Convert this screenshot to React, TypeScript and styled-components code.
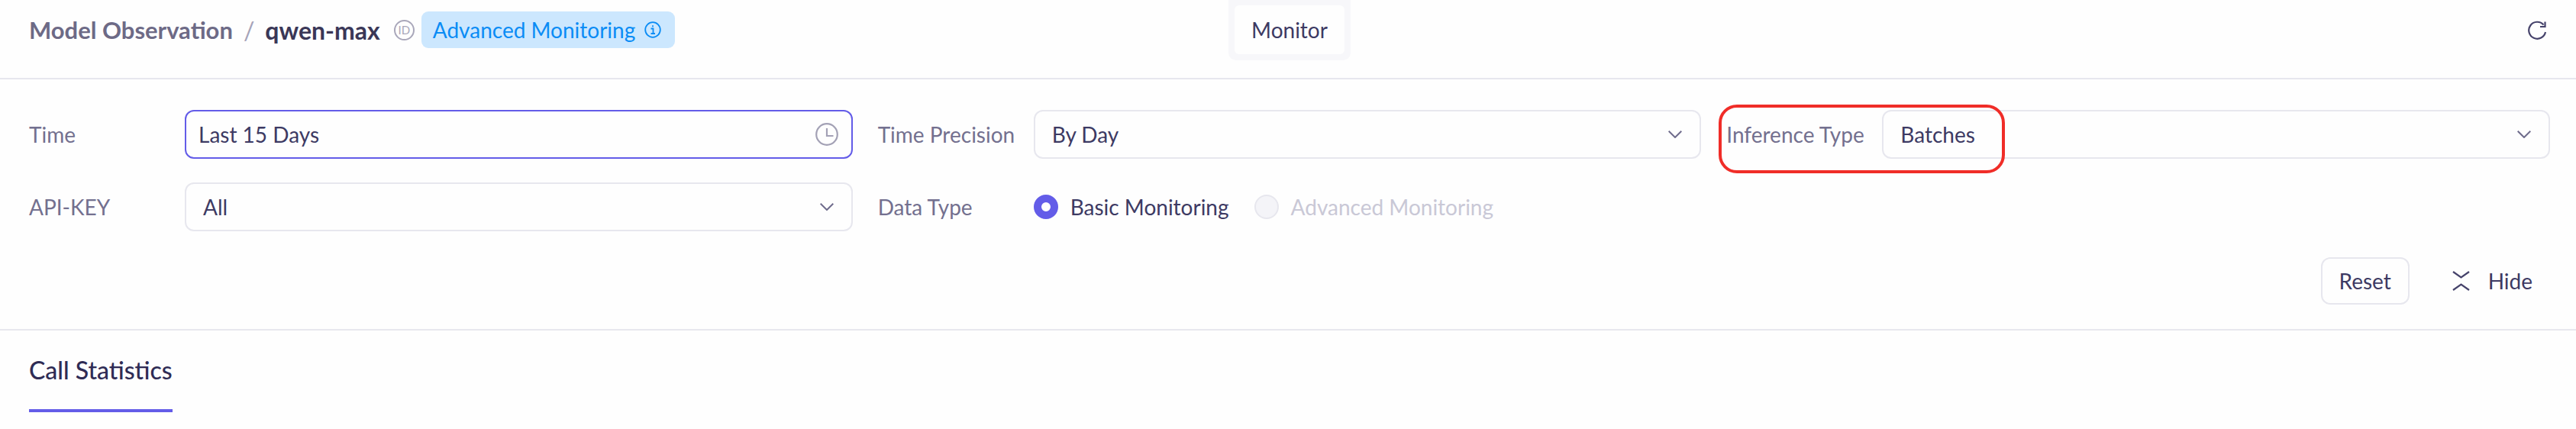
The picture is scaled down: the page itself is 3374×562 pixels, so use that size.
import styled, { createGlobalStyle } from "styled-components";

const GlobalStyle = createGlobalStyle`
  html, body {
    margin: 0;
    background: #fefefe;
    font-family: "Lato", "Liberation Sans", sans-serif;
    color: #3d3a63;
  }
  * { box-sizing: border-box; }
`;

const Page = styled.div`
  width: 3374px;
  height: 562px;
  overflow: hidden;
`;

const Header = styled.header`
  height: 104px;
  padding: 0 34px 0 38px;
  display: grid;
  grid-template-columns: 1fr auto 1fr;
  border-bottom: 2px solid #e7e7ee;
`;

const Breadcrumb = styled.div`
  height: 78px;
  display: flex;
  align-items: center;
  font-size: 32px;
`;

const Parent = styled.span`
  color: #6d6a86;
  font-size: 31px;
  font-weight: 700;
`;

const Slash = styled.span`
  color: #a5a3b8;
  margin: 0 14px;
`;

const Current = styled.span`
  color: #3a3757;
  font-weight: 700;
`;

const IdMark = styled.span`
  width: 27px;
  height: 27px;
  margin: 0 9px 0 18px;
  border: 2px solid #a9a7ba;
  border-radius: 50%;
  display: flex;
  align-items: center;
  justify-content: center;
  font-size: 15px;
  color: #a9a7ba;
`;

const Badge = styled.div`
  height: 48px;
  padding: 0 18px 0 15px;
  display: flex;
  align-items: center;
  gap: 12px;
  background: #cce7fe;
  border-radius: 9px;
  color: #0a8cf5;
  font-size: 28px;
`;

const TabStrip = styled.div`
  align-self: start;
  padding: 7px 8px 8px;
  background: #f7f7fa;
  border-radius: 0 0 10px 10px;
`;

const Tab = styled.div`
  width: 144px;
  height: 64px;
  display: flex;
  align-items: center;
  justify-content: center;
  background: #fefefe;
  border-radius: 6px;
  font-size: 28px;
`;

const HeaderActions = styled.div`
  height: 78px;
  display: flex;
  align-items: center;
  justify-content: flex-end;
  padding-right: 4px;
`;

const Filters = styled.section`
  padding: 40px 34px 32px 38px;
  border-bottom: 2px solid #e7e7ee;
`;

const FilterGrid = styled.div`
  display: grid;
  grid-template-columns: repeat(3, 1fr);
  column-gap: 33px;
  row-gap: 31px;
`;

const Field = styled.div`
  position: relative;
  height: 64px;
  display: grid;
  grid-template-columns: 204px 1fr;
  align-items: center;
`;

const Label = styled.label`
  color: #73708f;
  font-size: 28px;
`;

const Control = styled.div<{ $focused?: boolean }>`
  height: 64px;
  padding: 0 ${(p) => (p.$focused ? "17px 0 16px" : "23px 0 22px")};
  display: flex;
  align-items: center;
  justify-content: space-between;
  border: 2px solid ${(p) => (p.$focused ? "#635ce8" : "#e7e7ee")};
  border-radius: 12px;
  font-size: 28px;
  color: #3d3a63;
`;

const RadioGroup = styled.div`
  display: flex;
  align-items: center;
  gap: 33px;
`;

const RadioItem = styled.div<{ $disabled?: boolean }>`
  display: flex;
  align-items: center;
  gap: 16px;
  font-size: 28px;
  color: ${(p) => (p.$disabled ? "#c9c8d6" : "#3d3a63")};
`;

const RadioDot = styled.span<{ $checked?: boolean }>`
  width: 32px;
  height: 32px;
  border-radius: 50%;
  background: ${(p) => (p.$checked ? "#fefefe" : "#f4f4f8")};
  border: ${(p) => (p.$checked ? "10px solid #635ce8" : "2px solid #e7e7ee")};
`;

const Actions = styled.div`
  margin-top: 34px;
  display: flex;
  justify-content: flex-end;
  align-items: center;
`;

const ResetButton = styled.button`
  width: 116px;
  height: 62px;
  padding: 0;
  background: transparent;
  border: 2px solid #e7e7ee;
  border-radius: 12px;
  font: inherit;
  font-size: 28px;
  color: #3d3a63;
`;

const HideButton = styled.button`
  margin-left: 56px;
  padding: 0 23px 0 0;
  display: flex;
  align-items: center;
  gap: 24px;
  background: transparent;
  border: none;
  font: inherit;
  font-size: 28px;
  color: #3d3a63;
`;

const Highlight = styled.div`
  position: absolute;
  left: -10px;
  top: -7px;
  width: 375px;
  height: 90px;
  border: 4px solid #f02d28;
  border-radius: 24px;
  pointer-events: none;
`;

const TabBar = styled.nav`
  padding: 0 38px;
`;

const StatTab = styled.div`
  display: inline-block;
  height: 107px;
  padding-top: 32px;
  border-bottom: 4px solid #635ce8;
  font-size: 32px;
  font-weight: 500;
  color: #2f2c55;
`;

const ClockIcon = () => (
  <svg width="30" height="30" viewBox="0 0 30 30" fill="none" stroke="#a3a1b5" strokeWidth="2.2">
    <circle cx="15" cy="15" r="13.8" />
    <path d="M15 7V17H23.5" />
  </svg>
);

const ChevronIcon = () => (
  <svg width="18" height="10" viewBox="0 0 18 10" fill="none" stroke="#6f6c8c" strokeWidth="2">
    <path d="M0.7 0.7L9 9L17.3 0.7" />
  </svg>
);

const InfoIcon = () => (
  <svg width="22" height="22" viewBox="0 0 22 22" fill="none" stroke="#0a8cf5" strokeWidth="1.8">
    <circle cx="11" cy="11" r="9.8" />
    <path d="M8.5 9.5H11.5V16M8.5 16H14M11 5.2V7.2" />
  </svg>
);

const RefreshIcon = () => (
  <svg width="25" height="25" viewBox="0 0 25 25" fill="none" stroke="#45426a" strokeWidth="2.2">
    <path d="M20.5 5.5A11 11 0 1 0 23 15" />
    <path d="M22.5 1.5V8H16" />
  </svg>
);

const HideIcon = () => (
  <svg width="23" height="26" viewBox="0 0 23 26" fill="none" stroke="#45426a" strokeWidth="2.2">
    <path d="M1 1L11.5 8.5L22 1" />
    <path d="M1 25L11.5 17.5L22 25" />
  </svg>
);

export default function App() {
  return (
    <Page>
      <GlobalStyle />
      <Header>
        <Breadcrumb>
          <Parent>Model Observation</Parent>
          <Slash>/</Slash>
          <Current>qwen-max</Current>
          <IdMark>ID</IdMark>
          <Badge>
            Advanced Monitoring
            <InfoIcon />
          </Badge>
        </Breadcrumb>
        <TabStrip>
          <Tab>Monitor</Tab>
        </TabStrip>
        <HeaderActions>
          <RefreshIcon />
        </HeaderActions>
      </Header>

      <Filters>
        <FilterGrid>
          <Field>
            <Label>Time</Label>
            <Control $focused>
              Last 15 Days
              <ClockIcon />
            </Control>
          </Field>
          <Field>
            <Label>Time Precision</Label>
            <Control>
              By Day
              <ChevronIcon />
            </Control>
          </Field>
          <Field>
            <Label>Inference Type</Label>
            <Control>
              Batches
              <ChevronIcon />
            </Control>
            <Highlight />
          </Field>
          <Field>
            <Label>API-KEY</Label>
            <Control>
              All
              <ChevronIcon />
            </Control>
          </Field>
          <Field>
            <Label>Data Type</Label>
            <RadioGroup>
              <RadioItem>
                <RadioDot $checked />
                Basic Monitoring
              </RadioItem>
              <RadioItem $disabled>
                <RadioDot />
                Advanced Monitoring
              </RadioItem>
            </RadioGroup>
          </Field>
        </FilterGrid>
        <Actions>
          <ResetButton>Reset</ResetButton>
          <HideButton>
            <HideIcon />
            Hide
          </HideButton>
        </Actions>
      </Filters>

      <TabBar>
        <StatTab>Call Statistics</StatTab>
      </TabBar>
    </Page>
  );
}
